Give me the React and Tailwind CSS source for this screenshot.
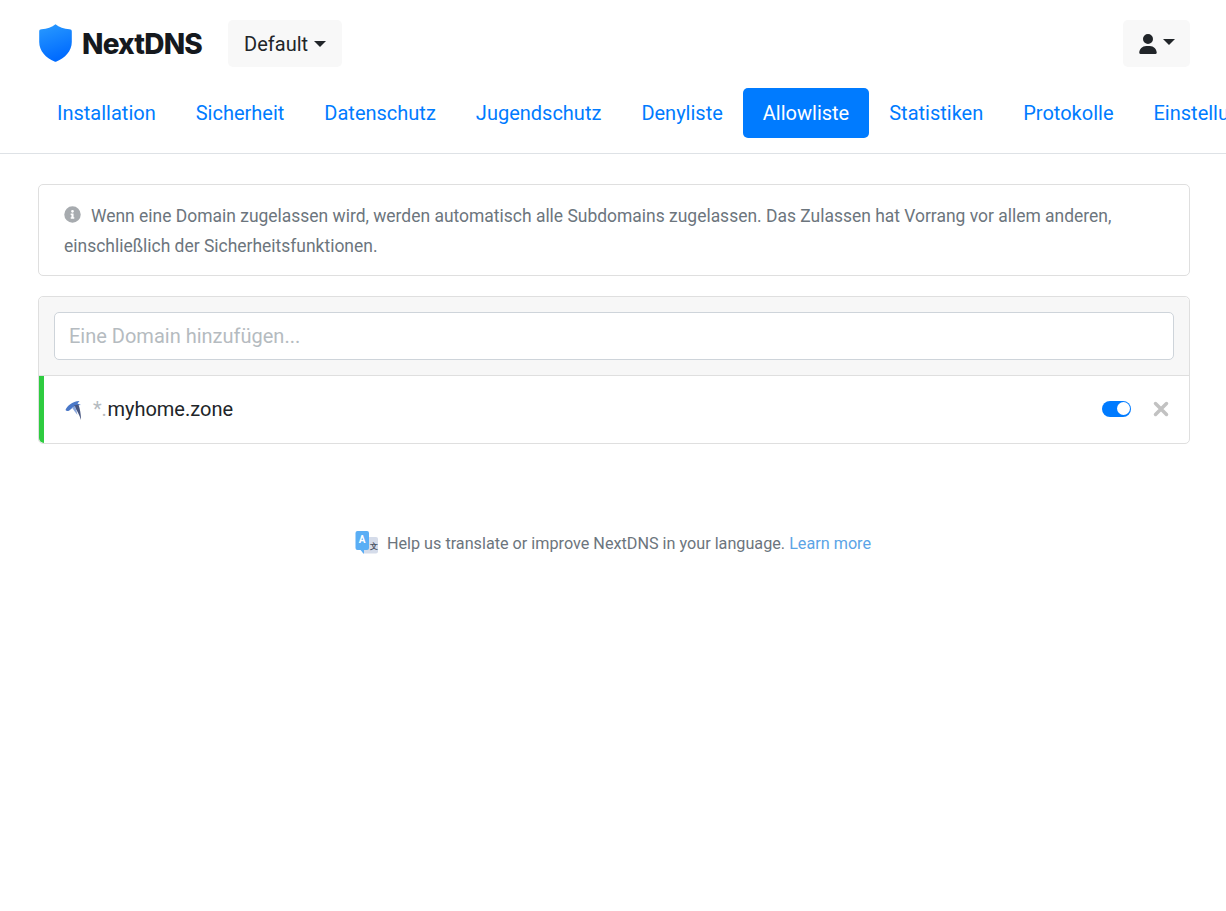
import React from 'react';

const tabs = ['Installation', 'Sicherheit', 'Datenschutz', 'Jugendschutz', 'Denyliste', 'Allowliste', 'Statistiken', 'Protokolle', 'Einstellungen'];

function Shield() {
  return (
    <svg width="33" height="38" viewBox="0 0 33 38">
      <defs>
        <linearGradient id="shieldFill" x1="0" y1="0" x2="0.300" y2="1">
          <stop offset="0" stopColor="#2a9bff" />
          <stop offset="1" stopColor="#006bff" />
        </linearGradient>
      </defs>
      <path d="M16.500 .3 C20 3 25 5 30.500 5.200 C32 5.300 32.800 6 32.800 7.500 L32.800 18 C32.800 27 26 34 17.500 37.600 C16.800 37.900 16.200 37.900 15.500 37.600 C7 34 .2 27 .2 18 L.2 7.500 C.2 6 1 5.300 2.500 5.200 C8 5 13 3 16.500 .3 Z" fill="url(#shieldFill)" />
    </svg>
  );
}

function Swift() {
  return (
    <svg width="20" height="20" viewBox="0 0 20 20">
      <path d="M1.500 10 C3 6 8 1.500 15.500 1 L13.500 3.500 L17 5 C13 5 9 7 6.500 9.500 C4.500 11.500 2.500 11.500 1.500 10 Z" fill="#4a78c8" />
      <path d="M10 5.500 L14.500 4.500 C16 9 17 14 17 20 C15.500 15 12.500 10 10 5.500 Z" fill="#46557f" />
      <path d="M8 7.500 L11 6 C12 9 13 12 13.500 15 C11.500 12.500 9.500 10 8 7.500 Z" fill="#8aa7dc" />
    </svg>
  );
}

function Translate() {
  return (
    <svg width="24" height="25" viewBox="0 0 24 25">
      <rect x="7" y="6" width="16" height="16.500" rx="2" fill="#d5dcea" />
      <path d="M2.500 0 H12 A2 2 0 0 1 14 2 V17 A2 2 0 0 1 12 19 H9 L9 23 L5.500 19 H2.500 A2 2 0 0 1 .5 17 V2 A2 2 0 0 1 2.500 0 Z" fill="#5aaef5" />
      <text x="7" y="12" fontSize="10" fontWeight="700" textAnchor="middle" fill="#fff">A</text>
      <text x="18.500" y="17.500" fontSize="8" fontWeight="700" textAnchor="middle" fill="#4b5563">文</text>
    </svg>
  );
}

export default function App() {
  return (
    <div className="min-h-[911px] bg-white font-['Roboto',sans-serif] text-[#212529] overflow-hidden">
      <div className="border-b border-[#dee2e6]">
        <div className="flex items-center justify-between pl-[38px] pr-[36px] pt-5">
          <div className="flex items-center">
            <span className="ml-px -mt-[2px] flex"><Shield /></span>
            <span className="ml-[10px] font-['Inter',sans-serif] text-[28px] font-extrabold tracking-[-0.8px] text-[#15191e]">NextDNS</span>
            <button className="ml-[26px] flex h-[47px] items-center rounded-[5px] bg-[#f8f8f8] px-4 text-xl">
              Default
              <span className="ml-[6px] border-x-[6px] border-t-[6px] border-x-transparent border-t-[#212529]" />
            </button>
          </div>
          <button className="flex h-[47px] w-[67px] items-center justify-center rounded-[5px] bg-[#f8f8f8]">
            <svg width="18" height="20" viewBox="0 0 448 512" fill="#212529">
              <path d="M224 256A128 128 0 1 0 224 0a128 128 0 1 0 0 256zm-45.700 48C79.800 304 0 383.800 0 482.300 0 498.700 13.300 512 29.700 512h388.600c16.400 0 29.700-13.300 29.700-29.700C448 383.800 368.200 304 269.700 304H178.300z" />
            </svg>
            <span className="ml-[6px] mb-1 border-x-[6px] border-t-[6px] border-x-transparent border-t-[#212529]" />
          </button>
        </div>
        <nav className="mt-[21px] flex pl-[37px] pb-[15px]">
          {tabs.map((tab) => (
            <a key={tab} className={tab === 'Allowliste' ? 'shrink-0 rounded-[5px] bg-[#007bff] px-5 py-[12px] text-xl leading-[26px] text-white' : 'shrink-0 px-5 py-[12px] text-xl leading-[26px] text-[#007bff]'}>
              {tab}
            </a>
          ))}
        </nav>
      </div>

      <div className="pl-[38px] pr-[36px] pt-[30px]">
        <div className="rounded-[5px] border border-[#dfdfdf] px-[25px] pt-4 pb-[14px] text-[17.47px] leading-[30px] text-[#6c757d]">
          <svg className="mr-[10px] inline-block align-[-1px]" width="17" height="17" viewBox="0 0 512 512" fill="#a7abaf">
            <path d="M256 8a248 248 0 1 0 0 496 248 248 0 0 0 0-496zm0 110a42 42 0 1 1 0 84 42 42 0 0 1 0-84zm56 254c0 7-5 12-12 12h-88c-7 0-12-5-12-12v-24c0-7 5-12 12-12h12v-64h-12c-7 0-12-5-12-12v-24c0-7 5-12 12-12h64c7 0 12 5 12 12v100h12c7 0 12 5 12 12v24z" />
          </svg>
          Wenn eine Domain zugelassen wird, werden automatisch alle Subdomains zugelassen. Das Zulassen hat Vorrang vor allem anderen, einschließlich der Sicherheitsfunktionen.
        </div>

        <div className="mt-5 rounded-[5px] border border-[#dfdfdf]">
          <div className="rounded-t-[5px] border-b border-[#dfdfdf] bg-[#f7f7f7] p-[15px]">
            <input className="h-12 w-full rounded-[5px] border border-[#ced4da] bg-white px-[14px] text-xl placeholder:text-[#b5bbc0]" placeholder="Eine Domain hinzufügen..." />
          </div>
          <div className="flex h-[67px] items-center rounded-b-[5px] border-l-[5px] border-l-[#2ecc40] pb-[2px] pl-[20px] pr-[20px]">
            <span className="mt-[2px] flex"><Swift /></span>
            <span className="ml-[9px] text-xl"><span className="mr-[0.5px] text-[#b5bbc0]">*.</span>myhome.zone</span>
            <span className="ml-auto flex h-4 w-[29px] items-center justify-end rounded-full bg-[#007bff] pr-[1.5px]">
              <span className="h-[13px] w-[13px] rounded-full bg-white" />
            </span>
            <svg className="ml-[22px]" width="16" height="16" viewBox="0 0 16 16" stroke="#c2c2c2" strokeWidth="3.500" strokeLinecap="round">
              <path d="M2.500 2.500 L13.500 13.500 M13.500 2.500 L2.500 13.500" />
            </svg>
          </div>
        </div>

        <div className="mt-[87px] flex items-center justify-center pr-[2px] text-[16.2px] leading-6 text-[#6c757d]">
          <Translate />
          <span className="ml-2">Help us translate or improve NextDNS in your language. <a className="text-[#5ba4e6]">Learn more</a></span>
        </div>
      </div>
    </div>
  );
}
